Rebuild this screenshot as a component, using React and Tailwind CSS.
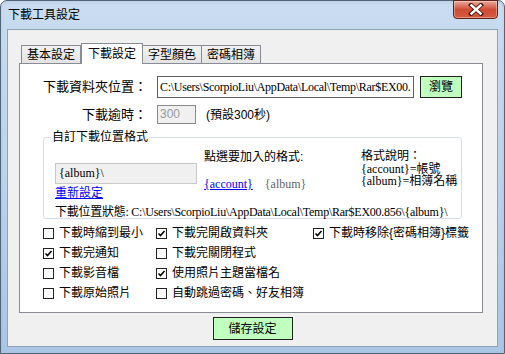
import React from 'react';

const cjk = "font-['Liberation_Sans','Noto_Sans_CJK_TC',sans-serif]";
const serif = "font-['Liberation_Serif','Noto_Sans_CJK_TC',serif]";

function Check({ checked, label }) {
  return (
    <div className="flex items-center h-[20px] gap-[5px]">
      <div className="w-[11px] h-[11px] border border-[#222] bg-white flex items-center justify-center">
        {checked && (
          <svg width="9" height="9" viewBox="0 0 9 9">
            <path d="M1.5 4.5 L3.5 6.5 L7.5 2" fill="none" stroke="#000" strokeWidth="1.6" />
          </svg>
        )}
      </div>
      <span className="text-[12px] text-black whitespace-nowrap">{label}</span>
    </div>
  );
}

export default function App() {
  const tabs = ['基本設定', '下載設定', '字型顏色', '密碼相簿'];

  return (
    <div className={`w-[505px] h-[354px] overflow-hidden bg-white ${cjk}`}>
      <div className="h-full flex flex-col rounded-t-[7px] border border-[#4f6478] bg-gradient-to-b from-[#c9dcf0] via-[#bcd3ec] to-[#a9c6e4] shadow-inner">
        {/* TITLE BAR */}
        <div className="h-[28px] flex items-start shrink-0 pl-[7px] pr-[6px]">
          <div className="flex-1 pt-[7px] text-[12px] text-black leading-[14px]">下載工具設定</div>
          <div className="w-[45px] h-[19px] -mt-px rounded-b-[4px] border border-[#5e2218] bg-gradient-to-b from-[#e9a99a] via-[#cf4c36] to-[#d65a3f] flex items-center justify-center shadow-[inset_0_0_0_1px_rgba(255,255,255,0.35)]">
            <svg width="16" height="13" viewBox="0 0 16 13">
              <path d="M3 2 L13 11 M13 2 L3 11" stroke="#4a1a12" strokeWidth="4.2" strokeLinecap="square" />
              <path d="M3.5 2.5 L12.5 10.5 M12.5 2.5 L3.5 10.5" stroke="#fff" strokeWidth="2.4" strokeLinecap="square" />
            </svg>
          </div>
        </div>

        {/* CLIENT AREA */}
        <div className="flex-1 mx-[6px] mb-[6px] border border-[#8ea3b8] bg-[#f0f0f0] flex flex-col">
          {/* Tabs */}
          <div className="flex items-end h-[33px] pl-[13px] shrink-0">
            {tabs.map((t, i) =>
              i === 1 ? (
                <div key={t} className="h-[21px] -mb-px px-[6px] border border-b-0 border-[#898c95] bg-white text-[12px] flex items-center z-10 relative">
                  {t}
                </div>
              ) : (
                <div key={t} className={`h-[18px] px-[5px] border border-b-0 border-[#898c95] bg-gradient-to-b from-[#f2f2f2] to-[#e3e3e3] text-[12px] flex items-center ${i === 2 ? '-ml-px' : ''} ${i === 3 ? '-ml-px' : ''}`}>
                  {t}
                </div>
              )
            )}
          </div>

          {/* Panel */}
          <div className="ml-[11px] w-[464px] h-[250px] border border-[#898c95] bg-white pl-[23px] pt-[12px] flex flex-col">
            <div className="flex items-center h-[22px]">
              <div className="w-[114px] text-[13px]">下載資料夾位置：</div>
              <div className={`w-[257px] h-[22px] border border-[#5f5f5f] px-[2px] text-[12px] tracking-[-0.3px] leading-[20px] overflow-hidden whitespace-nowrap ${serif}`}>
                C:\Users\ScorpioLiu\AppData\Local\Temp\Rar$EX00.
              </div>
              <div className="ml-[6px] w-[42px] h-[22px] border border-[#222] bg-[#c0ffc0] text-[12px] flex items-center justify-center">瀏覽</div>
            </div>

            <div className="flex items-center h-[19px] mt-[7px]">
              <div className="w-[114px] text-[13px] text-right pr-[10px]">下載逾時：</div>
              <div className="w-[39px] h-[19px] border border-[#8a8a8a] bg-[#f0f0f0] text-[12px] text-[#9a9a9a] leading-[17px] px-[2px]">300</div>
              <div className="ml-[10px] text-[12px]">(預設300秒)</div>
            </div>

            {/* Group box */}
            <div className="mt-[13px] w-[419px] h-[82px] border border-[#d5dde6] rounded-[3px] relative flex flex-col">
              <div className="absolute -top-[9px] left-[7px] bg-white px-[1px] text-[12px] leading-[16px]">自訂下載位置格式</div>
              <div className="flex mt-[12px] pl-[11px]">
                <div className="w-[149px] pt-[13px]">
                  <div className={`w-[142px] h-[21px] border border-[#c8c8c8] bg-[#f0f0f0] text-[12px] leading-[19px] px-[3px] ${serif}`}>{'{album}\\'}</div>
                  <div className="text-[12px] text-[#0000ff] underline leading-[16px] mt-[1px]">重新設定</div>
                </div>
                <div className="w-[157px] text-[12px]">
                  <div className="leading-[14px]">點選要加入的格式:</div>
                  <div className={`flex gap-[12px] mt-[13px] leading-[14px] ${serif}`}>
                    <span className="text-[#0000ff] underline">{'{account}'}</span>
                    <span className="text-[#666]">{'{album}'}</span>
                  </div>
                </div>
                <div className="text-[12px] leading-[12.5px]">
                  <div>格式說明：</div>
                  <div className={serif}>{'{account}'}=帳號</div>
                  <div className={serif}>{'{album}'}=相簿名稱</div>
                </div>
              </div>
              <div className={`pl-[11px] mt-[4px] text-[12px] leading-[14px] tracking-[-0.25px] whitespace-nowrap ${serif}`}>
                下載位置狀態: C:\Users\ScorpioLiu\AppData\Local\Temp\Rar$EX00.856\{'{album}'}\
              </div>
            </div>

            {/* Checkboxes */}
            <div className="flex mt-[4px]">
              <div className="w-[113px] flex flex-col">
                <Check label="下載時縮到最小" />
                <Check checked label="下載完通知" />
                <Check label="下載影音檔" />
                <Check label="下載原始照片" />
              </div>
              <div className="w-[157px] flex flex-col">
                <Check checked label="下載完開啟資料夾" />
                <Check label="下載完關閉程式" />
                <Check checked label="使用照片主題當檔名" />
                <Check label="自動跳過密碼、好友相簿" />
              </div>
              <div className="flex flex-col">
                <Check checked label="下載時移除{密碼相簿}標籤" />
              </div>
            </div>
          </div>

          {/* Save */}
          <div className="flex justify-center mt-[4px]">
            <div className="w-[80px] h-[23px] border border-[#222] bg-[#c0ffc0] text-[12px] flex items-center justify-center">儲存設定</div>
          </div>
        </div>
      </div>
    </div>
  );
}
